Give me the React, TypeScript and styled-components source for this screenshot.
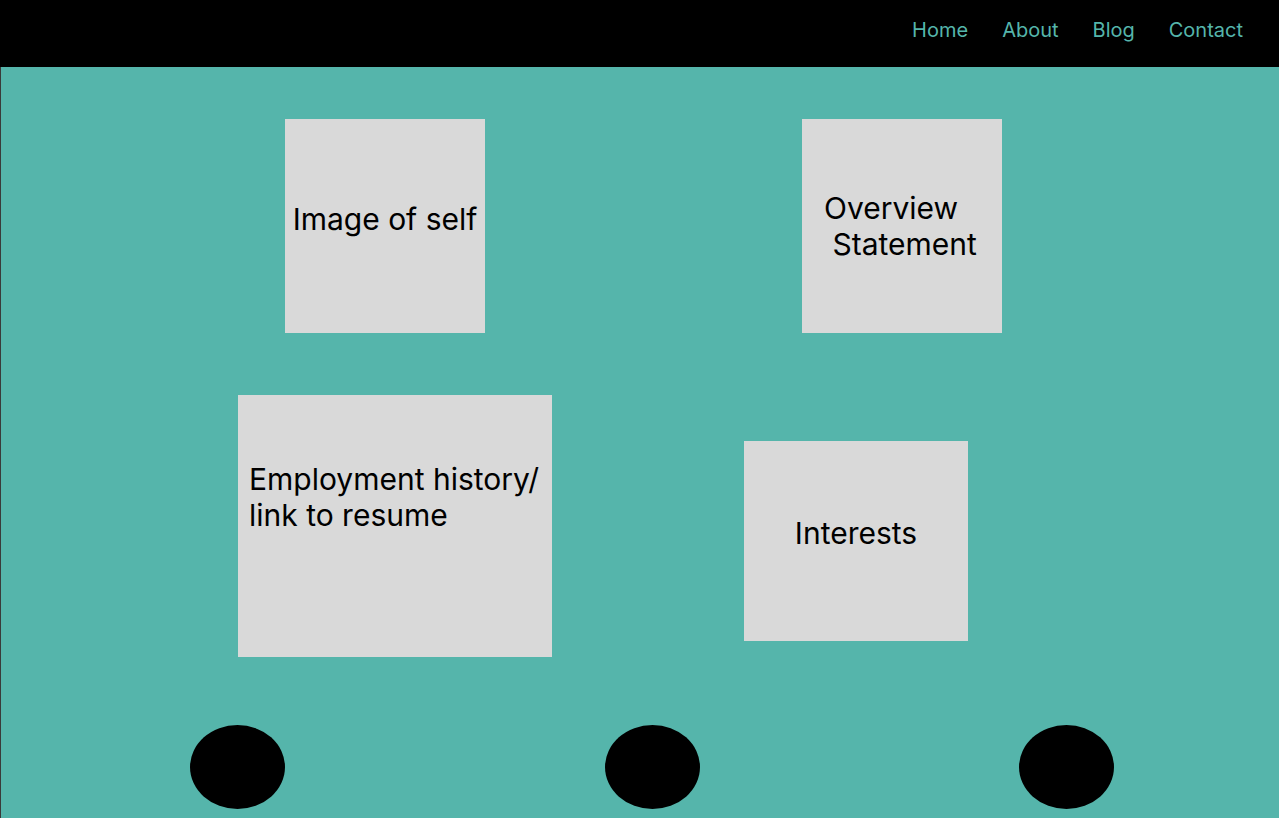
import React from "react";
import styled, { createGlobalStyle } from "styled-components";

const Global = createGlobalStyle`
  html, body { margin: 0; padding: 0; background: #55b5ab; }
  body { font-family: Inter, "Noto Sans", sans-serif; }
`;

const Page = styled.div`
  width: 1279px;
  height: 818px;
  display: flex;
  flex-direction: column;
  overflow: hidden;
`;

const Header = styled.header`
  height: 67px;
  background: #000;
  display: flex;
  justify-content: flex-end;
  align-items: center;
  padding-right: 36px;
  gap: 34px;
  box-sizing: border-box;
`;

const NavLink = styled.a`
  font-family: Inter, sans-serif;
  font-size: 20px;
  color: #55b5ab;
  text-decoration: none;
  margin-top: -7px;
`;

const Main = styled.main`
  flex: 1;
  background: #55b5ab;
  border-left: 1px solid #3a3a3a;
  display: flex;
  flex-direction: column;
`;

const Row = styled.div<{ $top: number; $left: number; $gap: number }>`
  display: flex;
  align-items: flex-start;
  margin-top: ${(p) => p.$top}px;
  padding-left: ${(p) => p.$left}px;
  gap: ${(p) => p.$gap}px;
`;

const Card = styled.div<{ $w: number; $h: number; $offset?: number; $align?: string; $pad?: number }>`
  width: ${(p) => p.$w}px;
  height: ${(p) => p.$h}px;
  margin-top: ${(p) => p.$offset ?? 0}px;
  background: #d9d9d9;
  display: flex;
  flex-direction: column;
  justify-content: center;
  align-items: ${(p) => p.$align ?? "center"};
  padding-left: ${(p) => p.$pad ?? 0}px;
  box-sizing: border-box;
  flex-shrink: 0;
`;

const Label = styled.div<{ $shift?: number }>`
  font-family: Inter, sans-serif;
  font-size: 30px;
  line-height: 36px;
  color: #000;
  white-space: pre;
  margin-top: ${(p) => p.$shift ?? 0}px;
`;

const Dot = styled.div`
  width: 95px;
  height: 84px;
  border-radius: 50%;
  background: #000;
  flex-shrink: 0;
`;

export default function App() {
  return (
    <>
      <Global />
      <Page>
        <Header>
          <NavLink>Home</NavLink>
          <NavLink>About</NavLink>
          <NavLink>Blog</NavLink>
          <NavLink>Contact</NavLink>
        </Header>
        <Main>
          <Row $top={52} $left={284} $gap={317}>
            <Card $w={200} $h={214}>
              <Label $shift={-14}>Image of self</Label>
            </Card>
            <Card $w={200} $h={214} $align="flex-start" $pad={22}>
              <Label>{"Overview\n Statement"}</Label>
            </Card>
          </Row>
          <Row $top={62} $left={237} $gap={192}>
            <Card $w={314} $h={262} $align="flex-start" $pad={11}>
              <Label $shift={-58}>{"Employment history/\nlink to resume"}</Label>
            </Card>
            <Card $w={224} $h={200} $offset={46}>
              <Label $shift={-17}>Interests</Label>
            </Card>
          </Row>
          <Row $top={68} $left={189} $gap={319.5}>
            <Dot />
            <Dot />
            <Dot />
          </Row>
        </Main>
      </Page>
    </>
  );
}
